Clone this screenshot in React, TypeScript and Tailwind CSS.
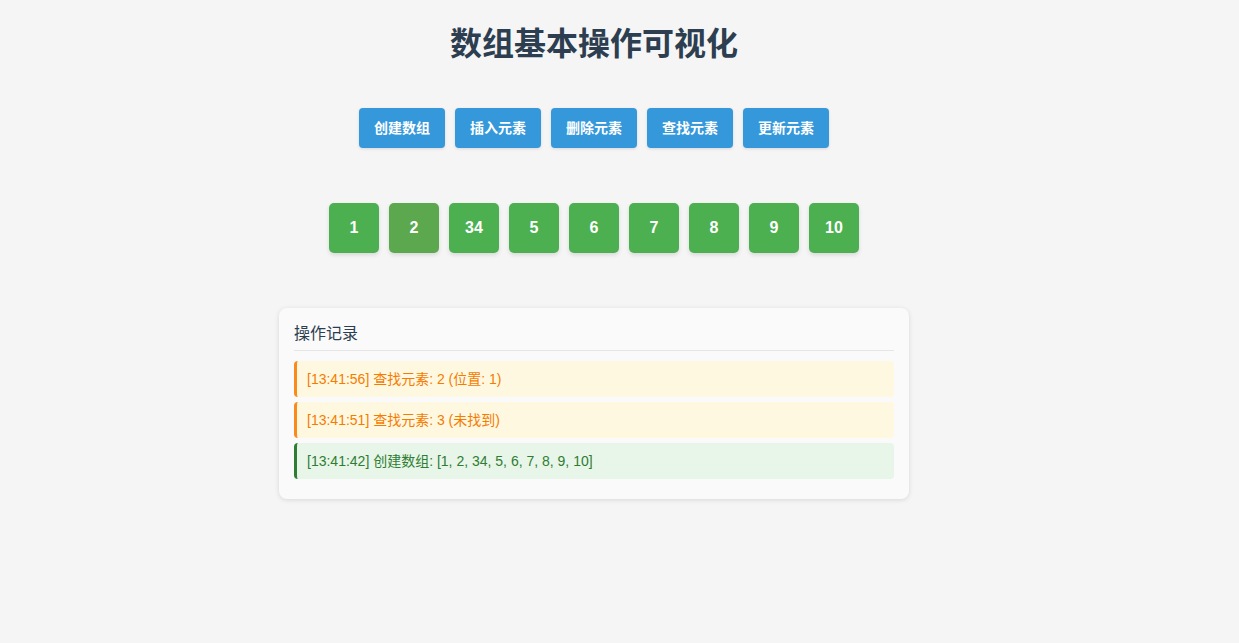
const buttons = ['创建数组', '插入元素', '删除元素', '查找元素', '更新元素']
const items = [1, 2, 34, 5, 6, 7, 8, 9, 10]
const logs = [
  { text: '[13:41:56] 查找元素: 2 (位置: 1)', kind: 'warn' },
  { text: '[13:41:51] 查找元素: 3 (未找到)', kind: 'warn' },
  { text: '[13:41:42] 创建数组: [1, 2, 34, 5, 6, 7, 8, 9, 10]', kind: 'ok' },
]

export default function App() {
  return (
    <div
      className="min-h-screen bg-[#f5f5f5]"
      style={{ fontFamily: '"Liberation Sans", Arial, "Noto Sans CJK SC", sans-serif' }}
    >
      <div className="w-[1188px] flex flex-col items-center pt-[21px]">
        <h1 className="text-[32px] leading-[46px] font-bold text-[#2c3e50]">数组基本操作可视化</h1>

        <div className="flex gap-[10px] mt-[41px]">
          {buttons.map((b) => (
            <button
              key={b}
              className="h-[40px] px-[15px] rounded-[4px] bg-[#3498db] text-white text-[14px] font-bold shadow-[0_1px_3px_rgba(0,0,0,0.12)]"
            >
              {b}
            </button>
          ))}
        </div>

        <div className="flex gap-[10px] mt-[55px]">
          {items.map((n, i) => (
            <div
              key={i}
              className={`w-[50px] h-[50px] rounded-[5px] flex items-center justify-center text-white text-[16px] font-bold shadow-[0_2px_4px_rgba(0,0,0,0.12)] ${
                i === 1 ? 'bg-[#5ca84f]' : 'bg-[#4caf50]'
              }`}
            >
              {n}
            </div>
          ))}
        </div>

        <div className="w-[630px] mt-[55px] bg-[#fafafa] rounded-[8px] shadow-[0_1px_5px_rgba(0,0,0,0.12)] px-[15px] pt-[15px] pb-[20px]">
          <div className="text-[16px] leading-[22px] text-[#2c3e50] pb-[5px] border-b border-[#e6e6e6]">操作记录</div>
          <div className="flex flex-col gap-[5px] mt-[10px]">
            {logs.map((l, i) => (
              <div
                key={i}
                className={`h-[36px] flex items-center pl-[10px] rounded-[4px] border-l-[3px] text-[14px] ${
                  l.kind === 'warn'
                    ? 'bg-[#fff8e1] border-[#f98a1b] text-[#f57c00]'
                    : 'bg-[#e8f5e9] border-[#2e7d32] text-[#2e7d32]'
                }`}
              >
                {l.text}
              </div>
            ))}
          </div>
        </div>
      </div>
    </div>
  )
}
